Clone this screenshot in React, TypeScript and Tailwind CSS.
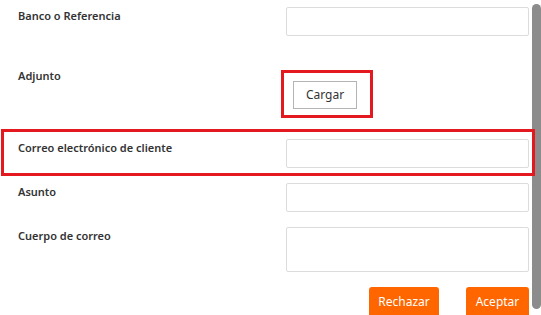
import React from 'react';

const labelCls = 'w-[286px] shrink-0 pl-[18px] text-[11px] leading-4 font-semibold text-[#333333]';
const inputCls = 'w-[243px] border border-[#dcdcdc] rounded-[2px] bg-white outline-none';

export default function App() {
  return (
    <div
      className="flex h-[315px] w-[541px] overflow-hidden bg-white"
      style={{ fontFamily: '"Noto Sans", "Open Sans", Arial, sans-serif' }}
    >
      <div className="relative flex-1">
        <form className="flex flex-col pt-[7px]">
          <div className="flex items-start">
            <label className={`${labelCls} pt-[1px]`}>Banco o Referencia</label>
            <input className={`${inputCls} h-[29px]`} />
          </div>

          <div className="mt-[32px] flex items-start">
            <label className={labelCls}>Adjunto</label>
            <div className="pl-[7px] pt-[13px]">
              <button
                type="button"
                className="flex h-[28px] w-[64px] items-center justify-center border border-[#b4b4b4] bg-white text-[12px] text-[#333333]"
              >
                Cargar
              </button>
            </div>
          </div>

          <div className="mt-[30px] flex items-start">
            <label className={`${labelCls} pt-[1px]`}>Correo electrónico de cliente</label>
            <input className={`${inputCls} h-[29px]`} />
          </div>

          <div className="mt-[15px] flex items-start">
            <label className={`${labelCls} pt-[1px]`}>Asunto</label>
            <input className={`${inputCls} h-[29px]`} />
          </div>

          <div className="mt-[15px] flex items-start">
            <label className={`${labelCls} pt-[1px]`}>Cuerpo de correo</label>
            <textarea className={`${inputCls} h-[45px] resize-none`} />
          </div>

          <div className="mt-[15px] flex justify-end gap-[27px] pr-[3px]">
            <button
              type="button"
              className="h-[30px] w-[70px] rounded-[3px] bg-[#ff6600] text-[12px] text-white"
            >
              Rechazar
            </button>
            <button
              type="button"
              className="h-[30px] w-[63px] rounded-[3px] bg-[#ff6600] text-[12px] text-white"
            >
              Aceptar
            </button>
          </div>
        </form>

        {/* annotation boxes */}
        <div className="pointer-events-none absolute left-[281px] top-[70px] z-20 h-[48px] w-[92px] border-[3px] border-[#e3191f]" />
        <div className="pointer-events-none absolute left-[1px] top-[129px] z-20 h-[47px] w-[534px] border-[3px] border-[#e3191f]" />
      </div>

      <div className="relative z-10 w-[9px] pt-[4px]">
        <div className="h-[305px] rounded-full bg-[#8c8c8c]" />
      </div>
    </div>
  );
}
